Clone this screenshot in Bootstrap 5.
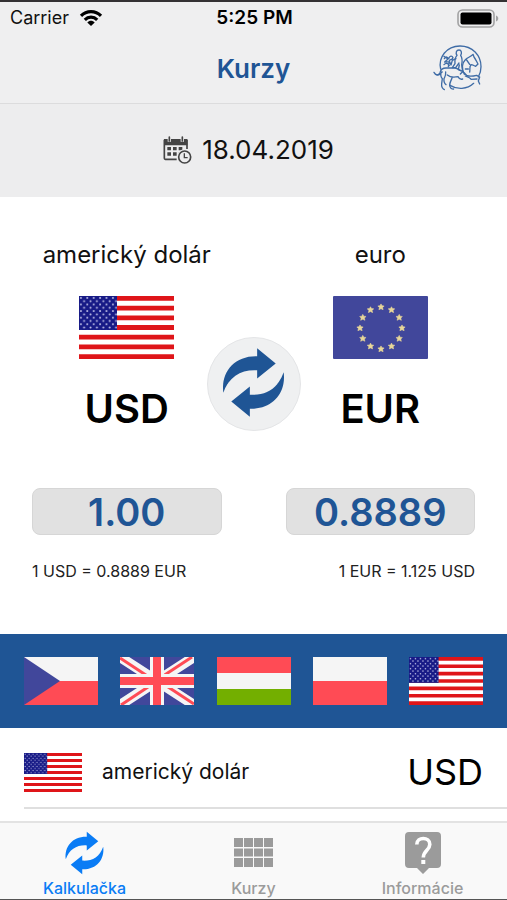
<!DOCTYPE html>
<html lang="sk">
<head>
<meta charset="utf-8">
<meta name="viewport" content="width=device-width, initial-scale=1">
<title>Kurzy</title>
<link href="https://cdn.jsdelivr.net/npm/bootstrap@5.3.0/dist/css/bootstrap.min.css" rel="stylesheet">
<style>
:root { --brand: #1f5595; --bar: #efeff0; }
body { font-family: Inter, "Noto Sans", sans-serif; color: #111; background: #fff; }
svg { display: block; flex-shrink: 0; }
.app-shell { border-top: 2px solid #343234; border-bottom: 1px solid #555; }
.top-bar { background: var(--bar); border-bottom: 1px solid #dcdcdd; }
.status-bar { height: 32px; font-size: 18px; line-height: 32px; padding: 0 8px 0 10px; }
.status-net { gap: 10px; }
.status-time { color: #000; font-size: 19px; font-weight: 600; }
.title-bar { height: 69px; padding: 0 24px; }
.app-title { color: var(--brand); font-size: 26px; line-height: 32px; font-weight: 600; }
.date-bar { height: 93px; background: #ededee; font-size: 26px; line-height: 32px; gap: 9px; padding: 0 10px 2px 0; color: #111; }
.converter { padding-top: 42px; padding-bottom: 51px; }
.cur-name { font-size: 24px; line-height: 32px; margin-bottom: 25px; }
.pair { padding-bottom: 39px; }
.cur-flag { width: 95px; height: 63px; }
.cur-code { font-size: 40px; line-height: 48px; font-weight: 600; color: #000; margin-top: 26px; }
.swap-btn { width: 94px; height: 94px; background: #eff0f1; border: 1px solid #e4e5e7; color: var(--brand); }
.swap-btn svg { margin-bottom: 4px; }
.side { padding: 0 32px; }
.amount { height: 47px; background: #e1e1e1; border: 1px solid #d6d6d6; border-radius: 8px; color: var(--brand); font-size: 38px; line-height: 44px; font-weight: 600; }
.rate { font-size: 16px; line-height: 24px; margin-top: 24px; color: #222; }
.flag-strip { background: var(--brand); padding: 23px 24px; }
.strip-flag { width: 74px; height: 48px; }
.cur-row { margin-left: 24px; padding: 22px 24px 13px 0; border-bottom: 2px solid #dfdfdf; }
.row-flag { width: 58px; height: 39px; }
.row-name { font-size: 21px; line-height: 32px; margin-left: 20px; }
.row-code { font-size: 36px; line-height: 44px; color: #000; }
.tab-bar { height: 78px; background: #f9f9f9; border-top: 2px solid #e3e3e3; }
.tab-link { color: #9b9b9b; font-size: 16px; line-height: 20px; font-weight: 500; padding-top: 8px; }
.tab-link.active { color: #0a7cf5; }
.tab-icon { height: 44px; margin-bottom: 3px; }
</style>
<script src="https://cdn.jsdelivr.net/npm/bootstrap@5.3.0/dist/js/bootstrap.bundle.min.js"></script>
</head>
<body>
<svg width="0" height="0" class="position-absolute" aria-hidden="true">
  <defs>
    <pattern id="stars" width="6.4" height="6.8" patternUnits="userSpaceOnUse">
      <rect width="6.4" height="6.8" fill="#171a86"/>
      <circle cx="1.9" cy="2" r="1" fill="#c3c4ea"/><circle cx="5.1" cy="5.4" r="1" fill="#c3c4ea"/>
    </pattern>
    <symbol id="us" viewBox="0 0 95 65" preserveAspectRatio="none">
      <path fill="#fff" d="M0 0h95v65H0z"/>
      <path stroke="#df1519" stroke-width="5" d="M0 2.500h95M0 12.500h95M0 22.500h95M0 32.500h95M0 42.500h95M0 52.500h95M0 62.500h95"/>
      <path fill="url(#stars)" d="M0 0h38v35H0z"/>
    </symbol>
    <symbol id="star" viewBox="-10 -10 20 20"><path fill="#e8d79a" stroke="#e8d79a" stroke-width="1.500" d="M0-9l2.900 5.300 6.500.7-4.700 4.700 1.400 6.400L0 5l-6.100 3.100 1.400-6.400-4.700-4.700 6.500-.7z"/></symbol>
    <symbol id="eu" viewBox="0 0 95 63" preserveAspectRatio="none">
      <rect width="95" height="63" rx="1" fill="#41479b"/>
      <g>
        <use href="#star" x="44.500" y="7.500" width="7" height="7"/><use href="#star" x="55" y="10.300" width="7" height="7"/>
        <use href="#star" x="62.700" y="18" width="7" height="7"/><use href="#star" x="65.500" y="28.500" width="7" height="7"/>
        <use href="#star" x="62.700" y="39" width="7" height="7"/><use href="#star" x="55" y="46.700" width="7" height="7"/>
        <use href="#star" x="44.500" y="49.500" width="7" height="7"/><use href="#star" x="34" y="46.700" width="7" height="7"/>
        <use href="#star" x="26.300" y="39" width="7" height="7"/><use href="#star" x="23.500" y="28.500" width="7" height="7"/>
        <use href="#star" x="26.300" y="18" width="7" height="7"/><use href="#star" x="34" y="10.300" width="7" height="7"/>
      </g>
    </symbol>
    <symbol id="arrows" viewBox="64 182 196 214">
      <path fill="currentColor" d="M71 320C63 258 104 208 173 210V186L229 232 173 277V252C126 249 88 270 71 320ZM253 258C261 320 220 370 151 368V392L95 346 151 301V326C198 329 236 308 253 258Z"/>
    </symbol>
  </defs>
</svg>

<div class="app-shell min-vh-100 d-flex flex-column">
  <header class="top-bar">
    <div class="status-bar row g-0">
      <div class="status-net col d-flex align-items-center">
        <span>Carrier</span>
        <svg width="24" height="16" viewBox="0 0 24 16" aria-hidden="true"><g fill="none" stroke="#000" stroke-width="3.200"><path d="M2 5.800C7.500.2 16.500.2 22 5.800"/><path d="M5.800 9.800c3.500-3.500 8.900-3.500 12.400 0"/></g><path d="M8.300 12.400c2.100-2.100 5.300-2.100 7.400 0L12 16z"/></svg>
      </div>
      <div class="col-auto status-time">5:25 PM</div>
      <div class="col d-flex align-items-center justify-content-end">
        <svg width="42" height="19" viewBox="0 0 42 19" aria-hidden="true"><rect x="1" y="1" width="36" height="17" rx="4.500" fill="none" stroke="#a2a2a3" stroke-width="1.600"/><rect x="3.500" y="3.500" width="31" height="12" rx="2"/><path fill="#a2a2a3" d="M39 6.500c3 1 3 5 0 6z"/></svg>
      </div>
    </div>
    <div class="title-bar row g-0 align-items-center">
      <div class="col"></div>
      <h1 class="app-title col-auto m-0">Kurzy</h1>
      <div class="col d-flex justify-content-end">
        <svg width="50" height="48" viewBox="35 27 150 144" fill="none" stroke="#3f6ca6" stroke-width="4" stroke-linecap="round" stroke-linejoin="round" role="img" aria-label="Logo">
          <path d="M58 99C50 65 75 30 116 30c37 0 63 28 63 62 0 12-3 22-8 31M157 142c-20 19-50 19-71 6"/>
          <path d="M38 109c5 10 14 10 18 1 2-9 8-14 18-14h27c8 0 13 7 17 8 10 2 12 10 18 14 10 5 22 2 30 0l9 5-4 12 4 9"/>
          <path d="M45 116c10 5 13-6 18-8M60 108c-4 11-2 15 3 20l-2 15c-1 8 2 15 8 18M73 108c1 11-2 14-5 20-1 10 0 14 6 18M78 117c7 6 22 7 32 5 3 6 8 9 14 7M92 126c-4 12-10 18-6 26 2 5 6 8 11 7M132 120c8 3 15 5 17 10l18-1"/>
          <path d="M129 115c-8-17-8-33 3-44 7-7 16-8 23-16l3 8c4 5 8 14 12 21l-7 7c-6-2-8-5-14-5-6 6-2 15-4 22M136 72l9 13M132 99h9"/>
          <path d="M107 58c-5-8-2-16 6-16s9 9 5 16M107 58c-6 7-7 17-6 25l-8 12h10l10-14M118 58c6 10 5 19 3 28l3 21-7 7M114 87l-3 14 8 3"/>
          <path d="M68 61l12 8-10 9 15-1 4 10 4-14 11-5M69 68c6-8 9-5 13 0 3-9 10-10 13-3-3 7-8 5-11 9M68 86c7-8 15-2 16 3M84 77l-3 15"/>
        </svg>
      </div>
    </div>
  </header>

  <div class="date-bar d-flex align-items-center justify-content-center">
    <svg width="30" height="30" viewBox="0 0 90 90" aria-hidden="true">
      <path fill="none" stroke="#444" stroke-width="5" stroke-linejoin="round" d="M4 14v56q0 3 3 3h34M72 14v28"/>
      <path fill="#444" d="M3 12h70v19H3zM13 36h11v10H13zM30 36h11v10H30zM47 36h11v10H47zM13 52h11v10H13zM30 52h11v10H30zM47 52h6v8h-6z"/>
      <path stroke="#ededee" stroke-width="10" d="M19 8v12M58 8v12"/><path stroke="#444" stroke-width="5" stroke-linecap="round" d="M19 6v12M58 6v12"/>
      <circle cx="65" cy="66" r="23" fill="#ededee"/><circle cx="65" cy="66" r="18" fill="none" stroke="#444" stroke-width="5"/><path fill="none" stroke="#444" stroke-width="4" d="M64 55v13h10"/>
    </svg>
    <time datetime="2019-04-18">18.04.2019</time>
  </div>

  <main class="flex-grow-1">
    <section class="converter text-center">
      <div class="row g-0">
        <div class="col cur-name">americký dolár</div>
        <div class="col cur-name">euro</div>
      </div>
      <div class="pair row g-0 position-relative">
        <div class="col">
          <svg class="cur-flag mx-auto" aria-hidden="true"><use href="#us"/></svg>
          <div class="cur-code">USD</div>
        </div>
        <div class="col">
          <svg class="cur-flag mx-auto" aria-hidden="true"><use href="#eu"/></svg>
          <div class="cur-code">EUR</div>
        </div>
        <button type="button" class="swap-btn btn rounded-circle p-0 d-flex align-items-center justify-content-center position-absolute top-50 start-50 translate-middle" aria-label="Vymeniť meny">
          <svg width="65" height="71"><use href="#arrows"/></svg>
        </button>
      </div>
      <div class="row g-0 mt-3">
        <div class="col side text-start">
          <input class="amount w-100 text-center p-0 d-block" type="text" inputmode="decimal" value="1.00" aria-label="Suma USD">
          <div class="rate text-nowrap">1 USD = 0.8889 EUR</div>
        </div>
        <div class="col side text-end">
          <input class="amount w-100 text-center p-0 d-block" type="text" inputmode="decimal" value="0.8889" aria-label="Suma EUR">
          <div class="rate text-nowrap">1 EUR = 1.125 USD</div>
        </div>
      </div>
    </section>

    <section class="flag-strip d-flex justify-content-between">
      <button type="button" class="btn border-0 p-0 rounded-0" aria-label="CZK"><svg class="strip-flag" viewBox="0 0 74 48" preserveAspectRatio="none"><path fill="#f5f5f5" d="M0 0h74v24H0z"/><path fill="#ff4b55" d="M0 24h74v24H0z"/><path fill="#41479b" d="M0 0l36 24L0 48z"/></svg></button>
      <button type="button" class="btn border-0 p-0 rounded-0" aria-label="GBP"><svg class="strip-flag" viewBox="0 0 74 48" preserveAspectRatio="none"><path fill="#41479b" d="M0 0h74v48H0z"/><path stroke="#f5f5f5" stroke-width="10" d="M0 0l74 48M74 0L0 48"/><path stroke="#ff4b55" stroke-width="3" d="M0 1l35 23M74 47L39 24M72 0L37 23M1 48l36-24"/><path stroke="#f5f5f5" stroke-width="14" d="M37 0v48M0 24h74"/><path stroke="#ff4b55" stroke-width="8" d="M37 0v48M0 24h74"/></svg></button>
      <button type="button" class="btn border-0 p-0 rounded-0" aria-label="HUF"><svg class="strip-flag" viewBox="0 0 74 48" preserveAspectRatio="none"><path fill="#ff4b55" d="M0 0h74v16H0z"/><path fill="#f5f5f5" d="M0 16h74v16H0z"/><path fill="#73af00" d="M0 32h74v16H0z"/></svg></button>
      <button type="button" class="btn border-0 p-0 rounded-0" aria-label="PLN"><svg class="strip-flag" viewBox="0 0 74 48" preserveAspectRatio="none"><path fill="#f5f5f5" d="M0 0h74v24H0z"/><path fill="#ff4b55" d="M0 24h74v24H0z"/></svg></button>
      <button type="button" class="btn border-0 p-0 rounded-0" aria-label="USD"><svg class="strip-flag"><use href="#us"/></svg></button>
    </section>

    <div class="cur-row d-flex align-items-center">
      <svg class="row-flag" aria-hidden="true"><use href="#us"/></svg>
      <span class="row-name">americký dolár</span>
      <span class="row-code ms-auto">USD</span>
    </div>
  </main>

  <nav class="tab-bar row g-0 text-center">
    <a href="#kalkulacka" class="tab-link active col text-decoration-none" aria-current="page">
      <span class="tab-icon d-flex align-items-center justify-content-center"><svg width="41" height="44"><use href="#arrows"/></svg></span>Kalkulačka
    </a>
    <a href="#kurzy" class="tab-link col text-decoration-none">
      <span class="tab-icon d-flex align-items-center justify-content-center"><svg width="39" height="30" viewBox="0 0 39 30" fill="currentColor"><path d="M0 0h9v9H0zM10 0h9v9h-9zM20 0h9v9h-9zM30 0h9v9h-9zM0 10.500h9v8H0zM10 10.500h9v8h-9zM20 10.500h9v8h-9zM30 10.500h9v8h-9zM0 20h9v9H0zM10 20h9v9h-9zM20 20h9v9h-9zM30 20h9v9h-9z"/></svg></span>Kurzy
    </a>
    <a href="#informacie" class="tab-link col text-decoration-none">
      <span class="tab-icon d-flex align-items-center justify-content-center"><svg width="36" height="42" viewBox="0 0 36 42"><path fill="#9b9b9b" d="M4 0h28q4 0 4 4v28q0 4-4 4h-8l-6 6-6-6H4q-4 0-4-4V4q0-4 4-4z"/><path fill="none" stroke="#fff" stroke-width="3.600" d="M11.800 12.500c0-8 13-8 13 0 0 5.500-6.500 6-6.500 13"/><path fill="#fff" d="M16.300 28h4v4h-4z"/></svg></span>Informácie
    </a>
  </nav>
</div>
</body>
</html>
